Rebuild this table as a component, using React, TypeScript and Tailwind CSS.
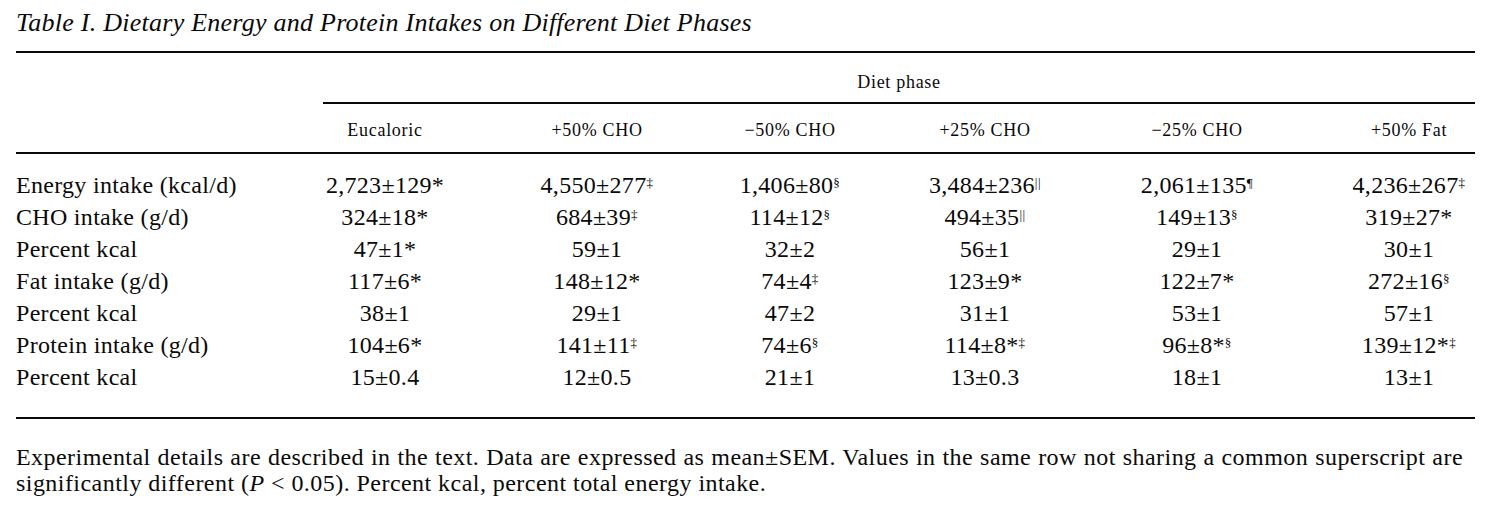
type Cell = [string, string?];

const headers = ["Eucaloric", "+50% CHO", "−50% CHO", "+25% CHO", "−25% CHO", "+50% Fat"];

const rows: { label: string; cells: Cell[] }[] = [
  {
    label: "Energy intake (kcal/d)",
    cells: [["2,723±129*"], ["4,550±277", "‡"], ["1,406±80", "§"], ["3,484±236", "||"], ["2,061±135", "¶"], ["4,236±267", "‡"]],
  },
  {
    label: "CHO intake (g/d)",
    cells: [["324±18*"], ["684±39", "‡"], ["114±12", "§"], ["494±35", "||"], ["149±13", "§"], ["319±27*"]],
  },
  {
    label: "Percent kcal",
    cells: [["47±1*"], ["59±1"], ["32±2"], ["56±1"], ["29±1"], ["30±1"]],
  },
  {
    label: "Fat intake (g/d)",
    cells: [["117±6*"], ["148±12*"], ["74±4", "‡"], ["123±9*"], ["122±7*"], ["272±16", "§"]],
  },
  {
    label: "Percent kcal",
    cells: [["38±1"], ["29±1"], ["47±2"], ["31±1"], ["53±1"], ["57±1"]],
  },
  {
    label: "Protein intake (g/d)",
    cells: [["104±6*"], ["141±11", "‡"], ["74±6", "§"], ["114±8*", "‡"], ["96±8*", "§"], ["139±12*", "‡"]],
  },
  {
    label: "Percent kcal",
    cells: [["15±0.4"], ["12±0.5"], ["21±1"], ["13±0.3"], ["18±1"], ["13±1"]],
  },
];

// column boxes, tuned so each column's centre sits under its header
const colClass = [
  "w-[210px] text-center",
  "w-[214px] text-center",
  "w-[172px] text-center",
  "w-[218px] text-center",
  "w-[206px] text-center",
  "w-[175px] pl-[43px] text-center",
];

function Value({ cell }: { cell: Cell }) {
  const [main, sup] = cell;
  return (
    <span>
      {main}
      {sup && <sup className="text-[13px] tracking-[0.5px]">{sup}</sup>}
    </span>
  );
}

export default function App() {
  return (
    <div className="w-[1500px] h-[517px] bg-white text-[#0a0a0a] font-['Liberation_Serif',serif] px-[16px] overflow-hidden">
      <div className="pt-[7px] text-[26px] leading-[32px] italic tracking-[0.25px]">
        Table I. Dietary Energy and Protein Intakes on Different Diet Phases
      </div>

      <div className="mt-[12px] w-[1459px] border-t-2 border-[#0a0a0a]" />

      <div className="ml-[307px] w-[1152px] mt-[19px] text-center text-[18px] leading-[20px] tracking-[0.7px]">
        Diet phase
      </div>
      <div className="ml-[307px] w-[1152px] mt-[10px] border-t-2 border-[#0a0a0a]" />

      <div className="flex mt-[16px] text-[18px] leading-[20px] tracking-[0.7px]">
        <div className="w-[264px]" />
        {headers.map((h, i) => (
          <div key={h} className={colClass[i]}>
            {h}
          </div>
        ))}
      </div>

      <div className="mt-[12px] w-[1459px] border-t-2 border-[#0a0a0a]" />

      <div className="mt-[15px] text-[24px] leading-[32px] tracking-[0.3px]">
        {rows.map((r, ri) => (
          <div key={ri} className="flex">
            <div className="w-[264px]">{r.label}</div>
            {r.cells.map((c, ci) => (
              <div key={ci} className={colClass[ci]}>
                <Value cell={c} />
              </div>
            ))}
          </div>
        ))}
      </div>

      <div className="mt-[24px] w-[1459px] border-t-2 border-[#0a0a0a]" />

      <div className="mt-[25px] w-[1447px] text-[24px] leading-[26px] tracking-[0.45px]">
        <div className="text-justify [text-align-last:justify]">
          Experimental details are described in the text. Data are expressed as mean±SEM. Values in the same row not
          sharing a common superscript are
        </div>
        <div>
          significantly different (<span className="italic">P</span> &lt; 0.05). Percent kcal, percent total energy
          intake.
        </div>
      </div>
    </div>
  );
}
